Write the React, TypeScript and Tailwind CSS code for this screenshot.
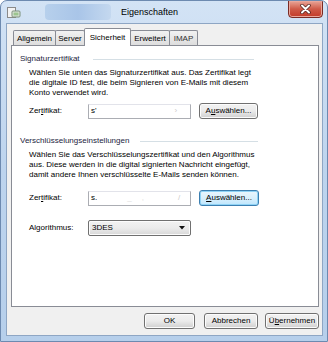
function U({ children }: { children: string }) {
    return <span className="underline underline-offset-1">{children}</span>;
}

function Button({ children, focused, className = "" }: { children: React.ReactNode; focused?: boolean; className?: string }) {
    return (
        <div
            className={
                "flex items-center justify-center rounded-[3px] border text-[8px] leading-none " +
                (focused
                    ? "border-[#3c7fb1] bg-gradient-to-b from-[#eaf6fd] via-[#d9f0fc] to-[#bee6fd] shadow-[inset_0_0_0_1px_#8fd3f5] "
                    : "border-[#707070] bg-gradient-to-b from-[#f2f2f2] via-[#ebebeb] to-[#cfcfcf] shadow-[inset_0_0_0_1px_#fcfcfc] ") +
                className
            }
        >
            {children}
        </div>
    );
}

function GroupHeading({ title, lineStart }: { title: string; lineStart: string }) {
    return (
        <div className="flex items-center">
            <span className="text-[8px] leading-[10px] text-[#1c2440]">{title}</span>
            <div className={"h-px flex-none bg-[#d5dfe5] " + lineStart} />
        </div>
    );
}

function Tab({ label, className = "" }: { label: string; className?: string }) {
    return (
        <div
            className={
                "mt-[2px] flex h-[16px] items-center rounded-t-[2px] border border-b-0 border-[#898c95] bg-gradient-to-b from-[#f2f2f2] to-[#dcdcdc] text-[8px] leading-none " +
                className
            }
        >
            {label}
        </div>
    );
}

export default function App() {
    return (
        <div
            className="flex h-[342px] w-[328px] flex-col overflow-hidden rounded-t-[7px] border border-[#6d8ab0] bg-gradient-to-b from-[#d3e3f5] via-[#bdd4ee] to-[#b6cfeb] text-black"
            style={{ fontFamily: '"Liberation Sans", Arial, sans-serif' }}
        >
            {/* title bar */}
            <div className="relative flex h-[22px] flex-none items-center">
                <svg className="ml-[6px] mt-[1px]" width="14" height="14" viewBox="0 0 14 14">
                    <rect x="0.5" y="1.5" width="8" height="10" fill="#f3f3f3" stroke="#8a8a8a" />
                    <rect x="5" y="5" width="8" height="6" rx="1" fill="#dfe6dc" stroke="#7b8f78" />
                    <rect x="6.5" y="6.5" width="5" height="3" fill="#9cc48f" />
                </svg>
                <div className="ml-[24px] h-[16px] w-[66px] rounded-sm bg-gradient-to-r from-[#b7d0ec] via-[#a9c5e8] to-[#c4d8ef]" />
                <span className="ml-[10px] text-[9px] leading-none text-black">Eigenschaften</span>
                <div className="absolute right-[4px] top-[-1px] flex h-[18px] w-[35px] items-center justify-center rounded-b-[4px] border border-[#7a2b25] bg-gradient-to-b from-[#e8a598] via-[#cf5a48] to-[#c23a28] shadow-[inset_0_0_0_1px_#eaa79b]">
                    <svg width="11" height="10" viewBox="0 0 11 10">
                        <path d="M2 1.5 L9 8.5 M9 1.5 L2 8.5" stroke="#4a1e1a" strokeWidth="3.4" strokeLinecap="round" />
                        <path d="M2 1.5 L9 8.5 M9 1.5 L2 8.5" stroke="#ffffff" strokeWidth="2" strokeLinecap="round" />
                    </svg>
                </div>
            </div>

            {/* client area */}
            <div className="mb-[5px] ml-[5px] mr-[4px] flex flex-1 flex-col border border-[#8ea6c4] bg-[#f0f0f0]">
                {/* tabs */}
                <div className="ml-[6px] mt-[4px] flex h-[18px] items-end">
                    <Tab label="Allgemein" className="w-[43px] justify-center" />
                    <Tab label="Server" className="-ml-px w-[30px] justify-center" />
                    <div className="relative z-10 -mx-[1px] flex h-[18px] w-[47px] items-center justify-center rounded-t-[2px] border border-b-0 border-[#898c95] bg-white text-[8px] leading-none">
                        Sicherheit
                    </div>
                    <Tab label="Erweitert" className="w-[40px] justify-center" />
                    <Tab label="IMAP" className="-ml-px w-[29px] justify-center text-[#333]" />
                </div>

                {/* panel */}
                <div className="ml-[4px] mr-[3px] -mt-px flex h-[262px] flex-col border border-[#898c95] bg-white pl-[8px] pt-[8px]">
                    <GroupHeading title="Signaturzertifikat" lineStart="ml-[13px] w-[161px]" />
                    <div className="ml-[9px] mt-[4px] text-[8px] leading-[10px]">
                        Wählen Sie unten das Signaturzertifikat aus. Das Zertifikat legt
                        <br />
                        die digitale ID fest, die beim Signieren von E-Mails mit diesem
                        <br />
                        Konto verwendet wird.
                    </div>
                    <div className="ml-[9px] mt-[5px] flex items-center">
                        <span className="w-[59px] text-[8px] leading-none">
                            Zer<U>t</U>ifikat:
                        </span>
                        <div className="flex h-[15px] w-[103px] items-center border border-[#abadb3] border-t-[#e2e3ea] bg-white pl-[2px] text-[8px] leading-none">
                            s'
                            <span className="ml-[78px] text-[#ccc]">›</span>
                        </div>
                        <Button className="ml-[8px] h-[16px] w-[59px]">
                            <span>
                                A<U>u</U>swählen...
                            </span>
                        </Button>
                    </div>

                    <div className="mt-[17px]">
                        <GroupHeading title="Verschlüsselungseinstellungen" lineStart="ml-[11px] w-[118px]" />
                    </div>
                    <div className="ml-[9px] mt-[4px] text-[8px] leading-[10px]">
                        Wählen Sie das Verschlüsselungszertifikat und den Algorithmus
                        <br />
                        aus. Diese werden in die digital signierten Nachricht eingefügt,
                        <br />
                        damit andere Ihnen verschlüsselte E-Mails senden können.
                    </div>
                    <div className="ml-[9px] mt-[10px] flex items-center">
                        <span className="w-[59px] text-[8px] leading-none">
                            Zer<U>t</U>ifikat:
                        </span>
                        <div className="flex h-[15px] w-[103px] items-center border border-[#abadb3] border-t-[#e2e3ea] bg-white pl-[2px] text-[8px] leading-none">
                            s.
                            <span className="ml-[30px] text-[#ddd]">_</span>
                            <span className="ml-[10px] text-[#ddd]">,</span>
                            <span className="ml-[34px] text-[#ccc]">/</span>
                        </div>
                        <Button focused className="ml-[8px] h-[16px] w-[60px]">
                            <span>
                                <U>A</U>uswählen...
                            </span>
                        </Button>
                    </div>
                    <div className="ml-[9px] mt-[14px] flex items-center">
                        <span className="w-[59px] text-[8px] leading-none">Algorithmus:</span>
                        <div className="flex h-[16px] w-[103px] items-center justify-between rounded-[2px] border border-[#707070] bg-gradient-to-b from-[#f2f2f2] via-[#ebebeb] to-[#d8d8d8] pl-[3px] pr-[5px] text-[8px] leading-none shadow-[inset_0_0_0_1px_#fcfcfc]">
                            3DES
                            <svg width="6" height="4" viewBox="0 0 6 4">
                                <path d="M0 0 H6 L3 3.5 Z" fill="#111" />
                            </svg>
                        </div>
                    </div>
                </div>

                {/* buttons */}
                <div className="mr-[3px] mt-[6px] flex justify-end gap-[9px]">
                    <Button className="h-[16px] w-[51px]">OK</Button>
                    <Button className="h-[16px] w-[54px]">Abbrechen</Button>
                    <Button className="-ml-[2px] h-[16px] w-[54px]">
                        <span>
                            Ü<U>b</U>ernehmen
                        </span>
                    </Button>
                </div>
            </div>
        </div>
    );
}
